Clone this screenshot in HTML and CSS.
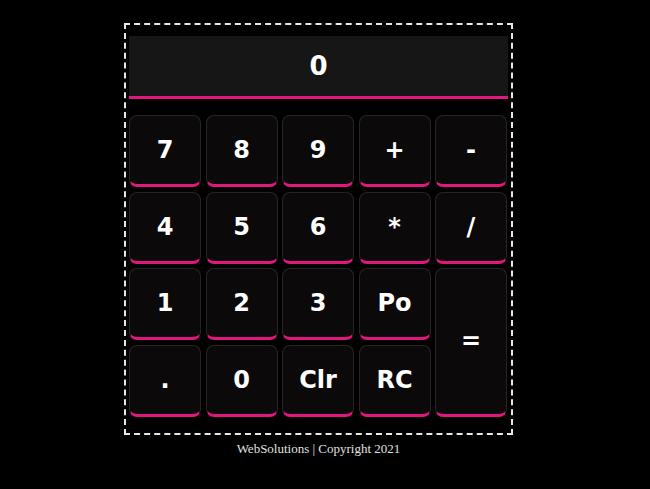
FILE: index.html
```html
<!DOCTYPE html>
<html>
<head>
<meta charset="utf-8">
<link rel="stylesheet" href="styles.css">
</head>
<body>
<div class="wrap">
  <div class="calc">
    <div class="display">0</div>
    <div class="keys">
      <button class="key">7</button>
      <button class="key">8</button>
      <button class="key">9</button>
      <button class="key">+</button>
      <button class="key">-</button>
      <button class="key">4</button>
      <button class="key">5</button>
      <button class="key">6</button>
      <button class="key">*</button>
      <button class="key">/</button>
      <button class="key">1</button>
      <button class="key">2</button>
      <button class="key">3</button>
      <button class="key">Po</button>
      <button class="key eq">=</button>
      <button class="key">.</button>
      <button class="key">0</button>
      <button class="key">Clr</button>
      <button class="key">RC</button>
    </div>
  </div>
  <div class="footer">WebSolutions | Copyright 2021</div>
</div>
</body>
</html>
```
FILE: styles.css
```css
html, body {
  margin: 0;
  background: #000;
}
.wrap {
  width: 389px;
  margin: 23px 0 0 124px;
}
.calc {
  border: 2px dashed #e8e8e8;
  padding: 11px 3px 16px 3px;
}
.display {
  height: 60px;
  background: #161616;
  border-bottom: 3px solid #e3167f;
  color: #fff;
  font-family: "DejaVu Sans", Verdana, sans-serif;
  font-weight: bold;
  font-size: 26px;
  display: flex;
  align-items: center;
  justify-content: center;
}
.keys {
  margin-top: 16px;
  display: grid;
  grid-template-columns: repeat(5, 72px);
  grid-auto-rows: 72px;
  gap: 4.5px;
}
.key {
  margin: 0;
  padding: 0;
  background: #0b0909;
  border: 1px solid #262426;
  border-bottom: 3px solid #e3167f;
  border-radius: 8px;
  color: #fff;
  font-family: "DejaVu Sans", Verdana, sans-serif;
  font-weight: bold;
  font-size: 24px;
}
.eq {
  grid-column: 5;
  grid-row: 3 / span 2;
}
.footer {
  text-align: center;
  font-family: "Liberation Serif", "Times New Roman", serif;
  font-size: 13px;
  color: #e0e0e0;
  margin-top: 6px;
}
```
